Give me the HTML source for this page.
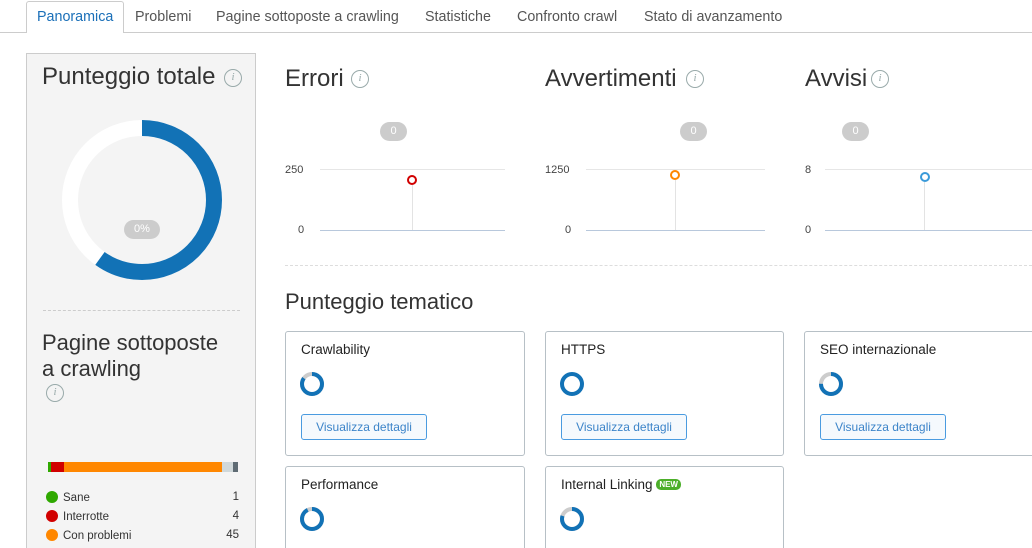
<!DOCTYPE html><html><head><meta charset="utf-8"><style>
*{margin:0;padding:0;box-sizing:border-box}
html,body{width:1032px;height:548px;overflow:hidden}
body{background:#fff;font-family:"Liberation Sans","DejaVu Sans",sans-serif;color:#333;position:relative}
.a{position:absolute;white-space:nowrap}
.tab{position:absolute;top:9px;font-size:14.3px;color:#555}
.info{position:absolute;width:18px;height:18px;border:1.5px solid #9aa;border-radius:50%;color:#9aa;font:italic 11px "Liberation Serif",serif;text-align:center;line-height:15px}
.h{font-size:24px;color:#333;font-weight:300}
.badge{position:absolute;background:#ccc;color:#fff;font-size:11px;border-radius:10px;text-align:center;height:19px;line-height:19px}
.card{position:absolute;border:1px solid #b7c0c6;border-radius:3px;background:#fff}
.card .t{position:absolute;left:15px;top:10px;font-size:13.5px;color:#222}
.btn{position:absolute;left:15px;top:82px;width:126px;height:26px;border:1px solid #4a9be0;border-radius:3px;background:#f5f9fd;color:#3c84c9;font-size:12px;text-align:center;line-height:24px}
.d{position:absolute;left:13px;top:39px}
.lg{position:absolute;left:46px;font-size:11.5px;color:#333;width:193px}
.lg i{display:inline-block;width:12px;height:12px;border-radius:50%;vertical-align:-2px;margin-right:5px}
.lg b{float:right;font-weight:normal}
.ax{position:absolute;font-size:11px;color:#444}
</style></head><body>
<div class="a" style="left:0;top:32px;width:1032px;height:1px;background:#ccc"></div>
<div class="a" style="left:26px;top:1px;width:98px;height:32px;border:1px solid #ccc;border-bottom:none;border-radius:3px 3px 0 0;background:#fff"></div>
<div class="tab" style="left:37px;color:#1a6fb8">Panoramica</div>
<div class="tab" style="left:135px">Problemi</div>
<div class="tab" style="left:216px">Pagine sottoposte a crawling</div>
<div class="tab" style="left:425px">Statistiche</div>
<div class="tab" style="left:517px">Confronto crawl</div>
<div class="tab" style="left:644px">Stato di avanzamento</div>

<div class="a" style="left:26px;top:53px;width:230px;height:500px;background:#f4f4f4;border:1px solid #ccc"></div>
<div class="a h" style="left:42px;top:63px">Punteggio totale</div>
<div class="info" style="left:224px;top:69px">i</div>
<svg class="a" style="left:62px;top:120px" width="160" height="160"><circle cx="80" cy="80" r="72" fill="none" stroke="#fff" stroke-width="16"/><circle cx="80" cy="80" r="72" fill="none" stroke="#1272b6" stroke-width="16" stroke-dasharray="271 453" transform="rotate(-90 80 80)"/></svg>
<div class="badge" style="left:124px;top:220px;width:36px">0%</div>
<div class="a" style="left:43px;top:310px;width:197px;border-top:1px dashed #ccc"></div>
<div class="a" style="left:42px;top:330px;font-size:22px;line-height:26px;color:#333">Pagine sottoposte<br>a crawling</div>
<div class="info" style="left:46px;top:384px">i</div>
<div class="a" style="left:48px;top:462px;height:10px;width:190px;display:flex"><i style="width:3px;background:#2fa800"></i><i style="width:13px;background:#d10000"></i><i style="width:158px;background:#ff8700"></i><i style="width:11px;background:#d0d8da"></i><i style="width:5px;background:#5e6b73"></i></div>
<div class="lg" style="top:491px"><i style="background:#2fa800"></i>Sane<b>1</b></div>
<div class="lg" style="top:510px"><i style="background:#d10000"></i>Interrotte<b>4</b></div>
<div class="lg" style="top:529px"><i style="background:#ff8700"></i>Con problemi<b>45</b></div>

<div class="a h" style="left:285px;top:65px">Errori</div><div class="info" style="left:351px;top:70px">i</div>
<div class="a h" style="left:545px;top:65px">Avvertimenti</div><div class="info" style="left:686px;top:70px">i</div>
<div class="a h" style="left:805px;top:65px">Avvisi</div><div class="info" style="left:871px;top:70px">i</div>
<div class="badge" style="left:380px;top:122px;width:27px">0</div>
<div class="badge" style="left:680px;top:122px;width:27px">0</div>
<div class="badge" style="left:842px;top:122px;width:27px">0</div>

<div class="ax" style="left:285px;top:164px">250</div><div class="ax" style="left:298px;top:224px">0</div>
<div class="a" style="left:320px;top:169px;width:185px;height:1px;background:#e6e6e6"></div>
<div class="a" style="left:320px;top:230px;width:185px;height:1px;background:#b8c8dc"></div>
<div class="a" style="left:412px;top:185px;width:1px;height:45px;background:#e3e3e3"></div>
<div class="a" style="left:407px;top:175px;width:10px;height:10px;border:2px solid #d10000;border-radius:50%;background:#fff"></div>

<div class="ax" style="left:545px;top:164px">1250</div><div class="ax" style="left:565px;top:224px">0</div>
<div class="a" style="left:586px;top:169px;width:179px;height:1px;background:#e6e6e6"></div>
<div class="a" style="left:586px;top:230px;width:179px;height:1px;background:#b8c8dc"></div>
<div class="a" style="left:675px;top:180px;width:1px;height:50px;background:#e3e3e3"></div>
<div class="a" style="left:670px;top:170px;width:10px;height:10px;border:2px solid #ff8700;border-radius:50%;background:#fff"></div>

<div class="ax" style="left:805px;top:164px">8</div><div class="ax" style="left:805px;top:224px">0</div>
<div class="a" style="left:825px;top:169px;width:207px;height:1px;background:#e6e6e6"></div>
<div class="a" style="left:825px;top:230px;width:207px;height:1px;background:#b8c8dc"></div>
<div class="a" style="left:924px;top:182px;width:1px;height:48px;background:#e3e3e3"></div>
<div class="a" style="left:920px;top:172px;width:10px;height:10px;border:2px solid #3a9ad9;border-radius:50%;background:#fff"></div>

<div class="a" style="left:285px;top:265px;width:747px;border-top:1px dashed #ddd"></div>
<div class="a" style="left:285px;top:289px;font-size:22px;color:#333">Punteggio tematico</div>

<div class="card" style="left:285px;top:331px;width:240px;height:125px"><div class="t">Crawlability</div><svg class="d" width="26" height="26"><circle cx="13" cy="13" r="10" fill="none" stroke="#ccc" stroke-width="4"/><circle cx="13" cy="13" r="10" fill="none" stroke="#1272b6" stroke-width="4" stroke-dasharray="53 63" transform="rotate(-90 13 13)"/></svg><div class="btn">Visualizza dettagli</div></div>
<div class="card" style="left:545px;top:331px;width:239px;height:125px"><div class="t">HTTPS</div><svg class="d" width="26" height="26"><circle cx="13" cy="13" r="10" fill="none" stroke="#1272b6" stroke-width="4"/></svg><div class="btn">Visualizza dettagli</div></div>
<div class="card" style="left:804px;top:331px;width:240px;height:125px"><div class="t">SEO internazionale</div><svg class="d" width="26" height="26"><circle cx="13" cy="13" r="10" fill="none" stroke="#ccc" stroke-width="4"/><circle cx="13" cy="13" r="10" fill="none" stroke="#1272b6" stroke-width="4" stroke-dasharray="47 63" transform="rotate(-90 13 13)"/></svg><div class="btn">Visualizza dettagli</div></div>
<div class="card" style="left:285px;top:466px;width:240px;height:100px"><div class="t">Performance</div><svg class="d" width="26" height="26"><circle cx="13" cy="13" r="10" fill="none" stroke="#ccc" stroke-width="4"/><circle cx="13" cy="13" r="10" fill="none" stroke="#1272b6" stroke-width="4" stroke-dasharray="58 63" transform="rotate(-90 13 13)"/></svg></div>
<div class="card" style="left:545px;top:466px;width:239px;height:100px"><div class="t">Internal Linking <span style="display:inline-block;background:#4caf2a;color:#fff;font-size:8px;font-weight:bold;border-radius:5px;padding:0 3px;line-height:11px;vertical-align:2px">NEW</span></div><svg class="d" width="26" height="26"><circle cx="13" cy="13" r="10" fill="none" stroke="#ccc" stroke-width="4"/><circle cx="13" cy="13" r="10" fill="none" stroke="#1272b6" stroke-width="4" stroke-dasharray="50 63" transform="rotate(-90 13 13)"/></svg></div>
</body></html>
